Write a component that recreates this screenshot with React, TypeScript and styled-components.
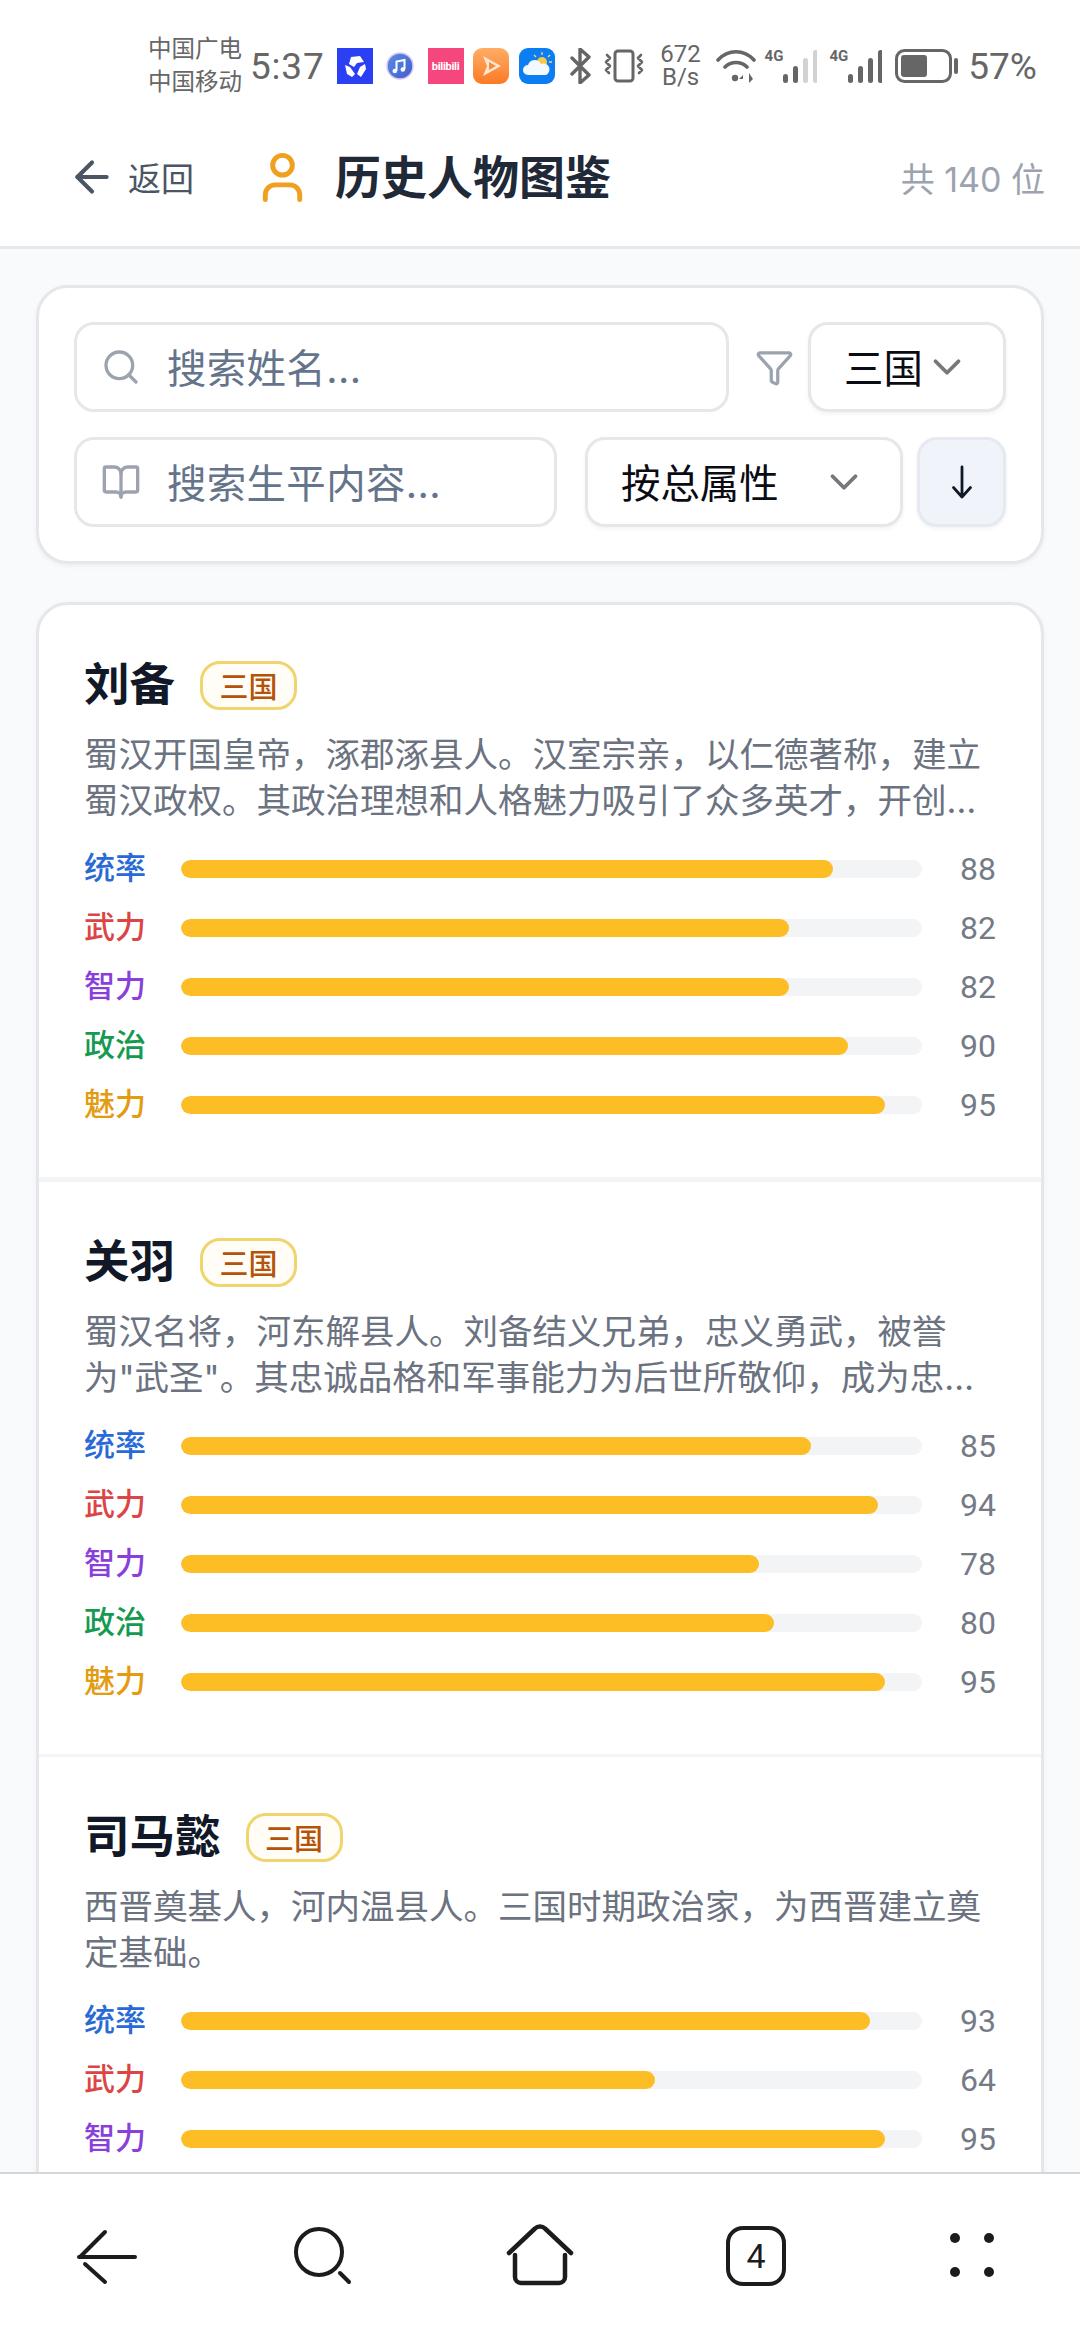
import styled, { createGlobalStyle } from 'styled-components'
import { ArrowLeft, BookOpen, ChevronDown, Funnel, Search, User } from 'lucide-react'

const people = [
  {
    name: '刘备',
    bio: '蜀汉开国皇帝，涿郡涿县人。汉室宗亲，以仁德著称，建立蜀汉政权。其政治理想和人格魅力吸引了众多英才，开创三国鼎立之局面，影响深远。',
    stats: [88, 82, 82, 90, 95],
    divider: 5,
  },
  {
    name: '关羽',
    bio: '蜀汉名将，河东解县人。刘备结义兄弟，忠义勇武，被誉为"武圣"。其忠诚品格和军事能力为后世所敬仰，成为忠义的象征，受历代尊崇。',
    stats: [85, 94, 78, 80, 95],
    divider: 3,
  },
  {
    name: '司马懿',
    bio: '西晋奠基人，河内温县人。三国时期政治家，为西晋建立奠定基础。',
    stats: [93, 64, 95, 92, 70],
    divider: 3,
  },
]

const statMeta = [
  { label: '统率', color: '#2a6ad6' },
  { label: '武力', color: '#dc4545' },
  { label: '智力', color: '#8b3fd9' },
  { label: '政治', color: '#159a50' },
  { label: '魅力', color: '#e39b12' },
]

const App = () => {
  return (
    <Screen>
      <GlobalStyle />
      <TopBar>
        <StatusBar>
          <Carriers>
            <span>中国广电</span>
            <span>中国移动</span>
          </Carriers>
          <Clock>5:37</Clock>
          <StatusIcon $left={12} width="36" height="36" viewBox="0 0 36 36">
            <rect width="36" height="36" fill="#2a40f2" />
            <path d="M14 9l9-1 4 6-7 1-3 4-5-3zM8 17l5 2 5 7-3 3-5-3zM28 16l1 5-5 8-4-3 3-7z" fill="#fff" />
          </StatusIcon>
          <StatusIcon $left={13} width="28" height="28" viewBox="0 0 28 28">
            <defs>
              <linearGradient id="musicFill" x1="0" y1="0" x2="1" y2="1">
                <stop offset="0" stopColor="#5b8de8" />
                <stop offset="1" stopColor="#3f5ec9" />
              </linearGradient>
            </defs>
            <circle cx="14" cy="14" r="13" fill="url(#musicFill)" stroke="#d9c6f5" strokeWidth="1.5" />
            <path d="M10.500 19V9.500l8-1.500v9" fill="none" stroke="#fff" strokeWidth="2" />
            <circle cx="8.800" cy="19" r="2.300" fill="#fff" />
            <circle cx="16.800" cy="17.500" r="2.300" fill="#fff" />
          </StatusIcon>
          <BiliTile>bilibili</BiliTile>
          <StatusIcon $left={9} width="36" height="36" viewBox="0 0 36 36">
            <defs>
              <linearGradient id="playFill" x1="0" y1="0" x2="0" y2="1">
                <stop offset="0" stopColor="#ffad66" />
                <stop offset="1" stopColor="#fb7a26" />
              </linearGradient>
            </defs>
            <rect width="36" height="36" rx="9" fill="url(#playFill)" />
            <path d="M10 8l18 10-18 10 4-10z" fill="#ffe6d2" />
            <path d="M16 14l7 4-7 4z" fill="#fb8a3c" />
          </StatusIcon>
          <StatusIcon $left={10} width="36" height="36" viewBox="0 0 36 36">
            <rect width="36" height="36" rx="9" fill="#0b7ef4" />
            <circle cx="23" cy="14" r="5" fill="#f8c948" />
            <path d="M23 4v3M31 7l-2 2M15 7l2 2M33 14h-3" stroke="#f8d978" strokeWidth="1.3" />
            <path d="M9 27a5 5 0 0 1 0-10 7 7 0 0 1 13-1 5.500 5.500 0 0 1 5 11z" fill="#f4f8ff" />
          </StatusIcon>
          <StatusIcon $left={15} width="21" height="36" viewBox="0 0 21 36" fill="none" stroke="#666" strokeWidth="3.4" strokeLinecap="round" strokeLinejoin="round">
            <path d="M2 10l17 17-9 8V1l9 8L2 26" />
          </StatusIcon>
          <StatusIcon $left={13} width="40" height="34" viewBox="0 0 40 34" fill="none" stroke="#666" strokeWidth="2.6" strokeLinecap="round" strokeLinejoin="round">
            <rect x="11" y="2" width="18" height="30" rx="3" strokeWidth="3" />
            <path d="M3 6l3 3-4 4 4 4-4 4 3 3M37 6l-3 3 4 4-4 4 4 4-3 3" />
          </StatusIcon>
          <NetSpeed>
            <span>672</span>
            <span>B/s</span>
          </NetSpeed>
          <StatusIcon $left={15} width="40" height="34" viewBox="0 0 40 34" fill="none" stroke="#666" strokeWidth="3.6" strokeLinecap="round">
            <path d="M2 11c10-11 26-11 36 0M9 18c6-6 16-6 22 0" />
            <circle cx="19" cy="29" r="3.200" fill="#666" stroke="none" />
            <path d="M27 26l-4 4h4zM33 24v10l4-4z" fill="#666" stroke="none" />
          </StatusIcon>
          <SimTag $left={9}>4G</SimTag>
          <StatusIcon $left={-1} width="35" height="34" viewBox="0 0 35 34">
            <Bars weak={2} />
          </StatusIcon>
          <SimTag $left={12}>4G</SimTag>
          <StatusIcon $left={-1} width="35" height="34" viewBox="0 0 35 34">
            <Bars weak={0} />
          </StatusIcon>
          <StatusIcon $left={13} width="63" height="34" viewBox="0 0 63 34">
            <rect x="1.500" y="1.500" width="54" height="31" rx="8" fill="none" stroke="#666" strokeWidth="3" />
            <rect x="6" y="6" width="26" height="22" rx="3" fill="#666" />
            <rect x="59" y="9" width="4" height="16" rx="2" fill="#666" />
          </StatusIcon>
          <Battery>57%</Battery>
        </StatusBar>
        <Header>
          <BackLink>
            <ArrowLeft size={50} strokeWidth={2} />
            <span>返回</span>
          </BackLink>
          <TitleIcon>
            <User size={59} strokeWidth={2} />
          </TitleIcon>
          <Title>历史人物图鉴</Title>
          <Total>共 140 位</Total>
        </Header>
      </TopBar>

      <Main>
        <FilterCard>
          <FilterRow>
            <SearchField>
              <Search size={40} strokeWidth={2} />
              <span>搜索姓名...</span>
            </SearchField>
            <FunnelSlot>
              <Funnel size={39} strokeWidth={2} />
            </FunnelSlot>
            <SelectBox $width={198}>
              <span>三国</span>
              <ChevronDown size={46} strokeWidth={2} />
            </SelectBox>
          </FilterRow>
          <FilterRow>
            <SearchField>
              <BookOpen size={40} strokeWidth={2} />
              <span>搜索生平内容...</span>
            </SearchField>
            <SelectBox $width={318} $offset={14}>
              <span>按总属性</span>
              <ChevronDown size={46} strokeWidth={2} />
            </SelectBox>
            <SortButton>
              <svg width="24" height="34" viewBox="0 0 24 34" fill="none" stroke="#111827" strokeWidth="2.800" strokeLinecap="round" strokeLinejoin="round">
                <path d="M12 2v30M3.500 22.500L12 32l8.500-9.500" />
              </svg>
            </SortButton>
          </FilterRow>
        </FilterCard>

        <PeopleList>
          {people.map((person) => (
            <PersonItem key={person.name} $divider={person.divider}>
              <NameRow>
                <PersonName>{person.name}</PersonName>
                <EraTag>三国</EraTag>
              </NameRow>
              <Bio>{person.bio}</Bio>
              <StatList>
                {statMeta.map((stat, i) => (
                  <StatRow key={stat.label}>
                    <StatLabel $color={stat.color}>{stat.label}</StatLabel>
                    <StatTrack>
                      <StatFill style={{ width: `${person.stats[i]}%` }} />
                    </StatTrack>
                    <StatValue>{person.stats[i]}</StatValue>
                  </StatRow>
                ))}
              </StatList>
            </PersonItem>
          ))}
        </PeopleList>
      </Main>

      <BottomNav>
        <NavCell>
          <svg width="72" height="72" viewBox="0 0 72 72" fill="none" stroke="#1c1c1e" strokeWidth="4" strokeLinecap="round" strokeLinejoin="round">
            <path d="M6 37h56M32 12L7 37M12 44l20 18" transform="translate(1 0)" />
          </svg>
        </NavCell>
        <NavCell>
          <svg width="72" height="72" viewBox="0 0 72 72" fill="none" stroke="#1c1c1e" strokeWidth="4" strokeLinecap="round">
            <circle cx="31" cy="32" r="23" />
            <path d="M52 53l9 9" />
          </svg>
        </NavCell>
        <NavCell>
          <svg width="72" height="72" viewBox="0 0 72 72" fill="none" stroke="#1c1c1e" strokeWidth="4.500" strokeLinecap="round" strokeLinejoin="round">
            <path d="M5 33L31 8.500a7 7 0 0 1 10 0L67 33" />
            <path d="M11 35v22a6 6 0 0 0 6 6h38a6 6 0 0 0 6-6V35" />
          </svg>
        </NavCell>
        <NavCell>
          <TabCount>4</TabCount>
        </NavCell>
        <NavCell>
          <svg width="72" height="72" viewBox="0 0 72 72" fill="#1c1c1e">
            <circle cx="19" cy="18" r="5" />
            <circle cx="53" cy="18" r="5" />
            <circle cx="19" cy="52" r="5" />
            <circle cx="53" cy="52" r="5" />
          </svg>
        </NavCell>
      </BottomNav>
    </Screen>
  )
}

const Bars = ({ weak }: { weak: number }) => (
  <>
    {[0, 1, 2, 3].map((i) => (
      <rect
        key={i}
        x={i * 10 + 1}
        y={25 - i * 8}
        width="5"
        height={9 + i * 8}
        rx="2.500"
        fill={i >= 4 - weak ? '#d2d2d2' : '#666'}
      />
    ))}
  </>
)

const GlobalStyle = createGlobalStyle`
  html, body {
    margin: 0;
    padding: 0;
    background: #fff;
  }
  * {
    box-sizing: border-box;
  }
`

const Screen = styled.div`
  width: 1080px;
  height: 2340px;
  display: flex;
  flex-direction: column;
  overflow: hidden;
  background: #f9fafb;
  font-family: "Inter", "Noto Sans CJK SC", sans-serif;
`

const TopBar = styled.div`
  flex: none;
  background: #fff;
  border-bottom: 3px solid #e5e7eb;
`

const StatusBar = styled.div`
  height: 132px;
  display: flex;
  align-items: center;
  padding-left: 148px;
  color: #666;
  font-family: "Roboto", "Noto Sans CJK SC", sans-serif;
`

const Carriers = styled.div`
  display: flex;
  flex-direction: column;
  font-size: 23.500px;
  line-height: 33px;
`

const Clock = styled.div`
  margin-left: 8px;
  font-size: 37px;
  letter-spacing: 0.8px;
`

const StatusIcon = styled.svg<{ $left: number }>`
  flex: none;
  margin-left: ${(p) => p.$left}px;
`

const BiliTile = styled.div`
  flex: none;
  width: 36px;
  height: 36px;
  margin-left: 14px;
  display: flex;
  align-items: center;
  justify-content: center;
  background: #f5477e;
  color: #fff;
  font-size: 11px;
  font-weight: 700;
  letter-spacing: -0.3px;
`

const NetSpeed = styled.div`
  flex: none;
  width: 40px;
  margin-left: 17px;
  display: flex;
  flex-direction: column;
  align-items: center;
  font-size: 24px;
  line-height: 23px;
`

const SimTag = styled.span<{ $left: number }>`
  flex: none;
  align-self: flex-start;
  margin: 49px 0 0 ${(p) => p.$left}px;
  font-size: 15px;
  line-height: 15px;
  font-weight: 700;
`

const Battery = styled.div`
  flex: none;
  margin-left: 10px;
  font-size: 37px;
`

const Header = styled.div`
  height: 114px;
  padding: 0 35px 24px 67px;
  display: flex;
  align-items: center;
`

const BackLink = styled.div`
  display: flex;
  align-items: center;
  gap: 11px;
  color: #4b5563;
  font-size: 33px;
`

const TitleIcon = styled.div`
  display: flex;
  margin-left: 59px;
  color: #f0a01e;
`

const Title = styled.h1`
  margin: 0 0 0 23px;
  color: #1f2937;
  font-size: 46px;
  font-weight: 700;
  line-height: 60px;
`

const Total = styled.div`
  margin-left: auto;
  color: #9ca3af;
  font-size: 34px;
`

const Main = styled.main`
  flex: 1;
  min-height: 0;
  overflow: hidden;
  padding: 36px;
  display: flex;
  flex-direction: column;
  gap: 38px;
`

const FilterCard = styled.section`
  flex: none;
  display: flex;
  flex-direction: column;
  gap: 25px;
  padding: 34px 35px;
  background: #fff;
  border: 3px solid #e5e7eb;
  border-radius: 32px;
  box-shadow: 0 2px 5px rgba(0, 0, 0, 0.05);
`

const FilterRow = styled.div`
  display: flex;
  align-items: center;
  gap: 14px;
  height: 90px;
`

const SearchField = styled.div`
  flex: 1;
  min-width: 0;
  height: 90px;
  display: flex;
  align-items: center;
  gap: 26px;
  padding-left: 24px;
  background: #fff;
  border: 3px solid #e5e7eb;
  border-radius: 20px;
  color: #64748b;
  font-size: 39.400px;

  svg {
    flex: none;
    color: #9ca3af;
  }

  span {
    padding-bottom: 4px;
    letter-spacing: 0.4px;
  }
`

const FunnelSlot = styled.div`
  display: flex;
  margin-left: 12px;
  color: #9ca3af;
`

const SelectBox = styled.div<{ $width: number; $offset?: number }>`
  flex: none;
  width: ${(p) => p.$width}px;
  height: 90px;
  margin-left: ${(p) => p.$offset ?? 0}px;
  display: flex;
  align-items: center;
  justify-content: space-between;
  padding: 0 33px;
  background: #fff;
  border: 3px solid #e5e7eb;
  border-radius: 20px;
  box-shadow: 0 2px 4px rgba(0, 0, 0, 0.05);
  color: #0b0b14;
  font-size: 39.400px;

  span {
    padding-bottom: 4px;
  }

  svg {
    flex: none;
    color: #77777d;
  }
`

const SortButton = styled.div`
  flex: none;
  width: 89px;
  height: 90px;
  display: flex;
  align-items: center;
  justify-content: center;
  background: #f0f4fa;
  border: 3px solid #e5e9f0;
  border-radius: 20px;
  box-shadow: 0 2px 4px rgba(0, 0, 0, 0.05);
`

const PeopleList = styled.section`
  flex: none;
  background: #fff;
  border: 3px solid #e5e7eb;
  border-radius: 32px;
  box-shadow: 0 2px 5px rgba(0, 0, 0, 0.05);
`

const PersonItem = styled.article<{ $divider: number }>`
  padding: 48px 45px 50px;
  border-bottom: ${(p) => p.$divider}px solid #f3f4f6;
`

const NameRow = styled.div`
  display: flex;
  align-items: center;
  gap: 25px;
  height: 64px;
`

const PersonName = styled.h2`
  margin: 0;
  color: #111827;
  font-size: 45.500px;
  font-weight: 700;
  line-height: 64px;
`

const EraTag = styled.span`
  height: 49px;
  padding: 0 16.500px;
  display: flex;
  align-items: center;
  background: #fffdf6;
  border: 3px solid #f0d56e;
  border-radius: 20px;
  color: #b45309;
  font-size: 29px;
  font-weight: 500;
`

const Bio = styled.p`
  margin: 15px 0 0;
  color: #6b7280;
  font-size: 34.500px;
  line-height: 46px;
  display: -webkit-box;
  -webkit-line-clamp: 2;
  -webkit-box-orient: vertical;
  overflow: hidden;
`

const StatList = styled.div`
  margin-top: 23px;
  display: flex;
  flex-direction: column;
  gap: 15px;
`

const StatRow = styled.div`
  display: grid;
  grid-template-columns: 97px 1fr 74px;
  align-items: center;
  height: 44px;
`

const StatLabel = styled.span<{ $color: string }>`
  padding-bottom: 3px;
  color: ${(p) => p.$color};
  font-size: 31px;
  font-weight: 500;
  line-height: 38px;
`

const StatTrack = styled.div`
  height: 18px;
  background: #f3f4f6;
  border-radius: 9px;
  overflow: hidden;
`

const StatFill = styled.div`
  height: 100%;
  background: #fcbd25;
  border-radius: 9px;
`

const StatValue = styled.span`
  text-align: right;
  color: #757b86;
  font-family: "Roboto", sans-serif;
  font-size: 32px;
  line-height: 38px;
`

const BottomNav = styled.nav`
  flex: none;
  height: 168px;
  display: grid;
  grid-template-columns: repeat(5, 1fr);
  background: #fff;
  border-top: 2px solid #d6d6d6;
`

const NavCell = styled.div`
  display: flex;
  align-items: center;
  justify-content: center;
  padding-bottom: 2px;
`

const TabCount = styled.div`
  width: 60px;
  height: 60px;
  display: flex;
  align-items: center;
  justify-content: center;
  border: 4.500px solid #1c1c1e;
  border-radius: 17px;
  color: #1c1c1e;
  font-family: "Roboto", sans-serif;
  font-size: 34px;
`

export default App
